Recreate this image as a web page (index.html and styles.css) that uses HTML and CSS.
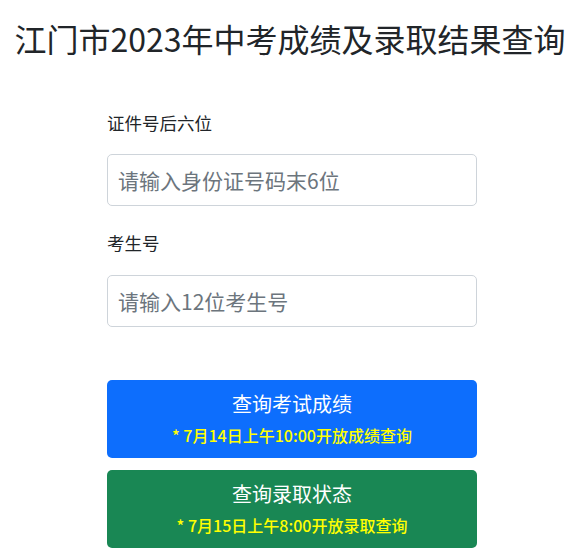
FILE: index.html
```html
<!DOCTYPE html>
<html lang="zh-CN">
<head>
<meta charset="utf-8">
<title>江门市2023年中考成绩及录取结果查询</title>
<link rel="stylesheet" href="styles.css">
</head>
<body>
<div class="page">
  <h1 class="title">江门市2023年中考成绩及录取结果查询</h1>
  <form class="form">
    <div class="field">
      <label class="label" for="idno">证件号后六位</label>
      <input class="input" id="idno" type="text" placeholder="请输入身份证号码末6位">
    </div>
    <div class="field">
      <label class="label" for="examno">考生号</label>
      <input class="input" id="examno" type="text" placeholder="请输入12位考生号">
    </div>
    <div class="actions">
      <button type="button" class="btn btn-primary">
        <span class="btn-main">查询考试成绩</span>
        <span class="btn-note">* 7月14日上午10:00开放成绩查询</span>
      </button>
      <button type="button" class="btn btn-success">
        <span class="btn-main">查询录取状态</span>
        <span class="btn-note">* 7月15日上午8:00开放录取查询</span>
      </button>
    </div>
  </form>
</div>
</body>
</html>
```

FILE: styles.css
```css
* { box-sizing: border-box; }
html, body { margin: 0; padding: 0; background: #fff; }
body {
  font-family: "Noto Sans CJK SC", "Noto Sans", sans-serif;
  color: #212529;
}
.page {
  display: flex;
  flex-direction: column;
  align-items: center;
}
.title {
  margin: 18px 0 0 4px;
  font-size: 32px;
  font-weight: 400;
  line-height: 1.25;
  white-space: nowrap;
}
.form {
  width: 370px;
  margin: 52px 0 0 8px;
  display: flex;
  flex-direction: column;
}
.field {
  display: flex;
  flex-direction: column;
  margin-bottom: 24px;
}
.label {
  font-size: 17.5px;
  line-height: 1.5;
  margin-bottom: 18px;
}
.input {
  height: 52px;
  width: 100%;
  border: 1px solid #ced4da;
  border-radius: 5px;
  padding: 0 10px;
  font-family: inherit;
  font-size: 21px;
  color: #212529;
  outline: none;
}
.input::placeholder { color: #6c757d; }
.actions {
  display: flex;
  flex-direction: column;
  gap: 12px;
  margin-top: 29px;
}
.btn {
  height: 78px;
  border: 0;
  border-radius: 5px;
  display: flex;
  flex-direction: column;
  align-items: center;
  justify-content: center;
  gap: 8px;
  font-family: inherit;
  color: #fff;
  cursor: pointer;
}
.btn-primary { background: #0d6efd; }
.btn-success { background: #198754; }
.btn-main { font-size: 20px; line-height: 1.3; }
.btn-note {
  font-size: 16px;
  font-weight: 500;
  line-height: 1.3;
  color: #ffff00;
}
```
